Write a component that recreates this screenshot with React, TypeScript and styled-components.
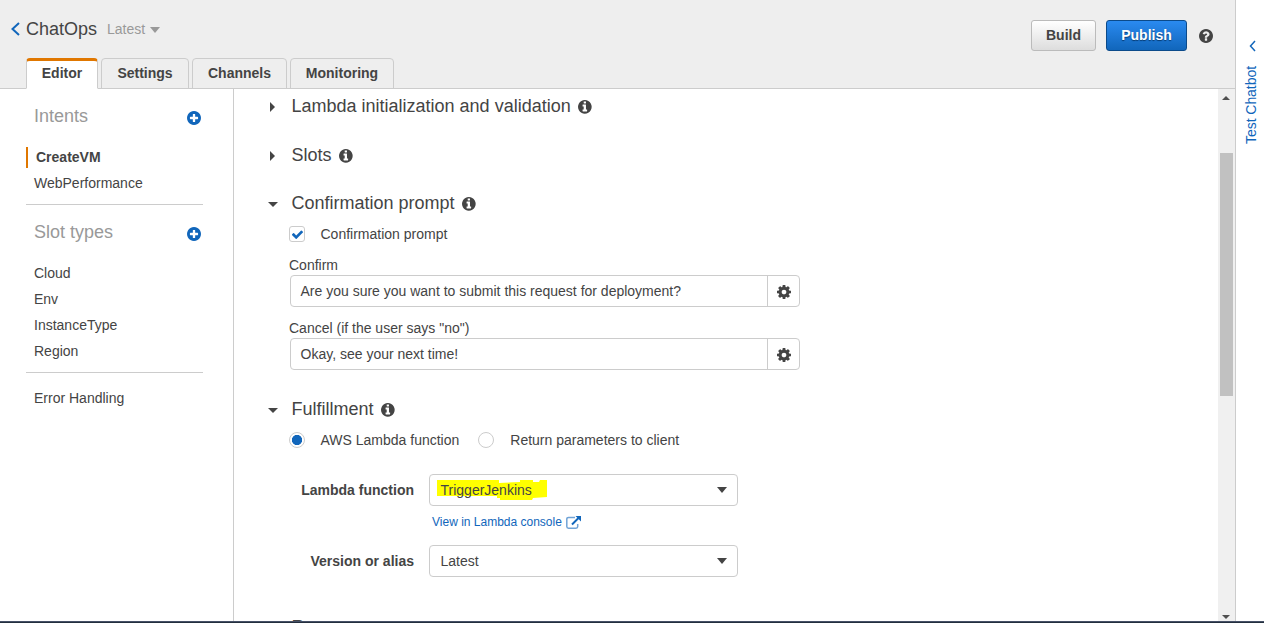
import React from "react";
import styled, { createGlobalStyle, css } from "styled-components";

const GlobalStyle = createGlobalStyle`
  * { box-sizing: border-box; }
  body {
    margin: 0;
    background: #fff;
    color: #444;
    font: 14px/20px "Liberation Sans", Arial, sans-serif;
    overflow: hidden;
  }
`;

const line = "#ccc";
const blue = "#1166bb";
const orange = "#e07700";

const Page = styled.div`
  display: flex;
  flex-direction: column;
  height: 623px;
`;

const Workspace = styled.div`
  display: flex;
  flex: 1;
  min-height: 0;
`;

const Console = styled.div`
  display: flex;
  flex-direction: column;
  flex: 1;
  min-width: 0;
  border-right: 1px solid ${line};
`;

const BottomEdge = styled.div`
  height: 2px;
  background: #232f3e;
  border-top: 1px solid #465066;
`;

const Header = styled.header`
  display: flex;
  justify-content: space-between;
  height: 89px;
  background: #eee;
  border-bottom: 1px solid ${line};
`;

const HeaderLeft = styled.div`
  display: flex;
  flex-direction: column;
  justify-content: space-between;
`;

const TitleRow = styled.div`
  display: flex;
  align-items: center;
  height: 24px;
  margin: 17px 0 0 11px;
`;

const BotName = styled.h1`
  margin: 0 0 0 6px;
  width: 81px;
  font-size: 18px;
  font-weight: normal;
  line-height: 24px;
`;

const VersionMenu = styled.span`
  display: flex;
  align-items: center;
  gap: 5px;
  color: #999;
  svg { margin-top: 2px; }
`;

const Tabs = styled.nav`
  display: flex;
  gap: 3px;
  margin: 0 0 -1px 26px;
`;

const Tab = styled.a<{ $width: number; $active?: boolean }>`
  width: ${(p) => p.$width}px;
  height: 31px;
  padding-top: 4px;
  border: 1px solid ${line};
  border-radius: 4px 4px 0 0;
  font-weight: bold;
  line-height: 20px;
  text-align: center;
  ${(p) =>
    p.$active &&
    css`
      padding-top: 2px;
      background: #fff;
      border-top: 3px solid ${orange};
      border-bottom-color: #fff;
    `}
`;

const Actions = styled.div`
  display: flex;
  align-items: flex-start;
  padding: 20px 22px 0 0;
  gap: 10px;
`;

const Button = styled.button<{ $primary?: boolean }>`
  width: ${(p) => (p.$primary ? 81 : 65)}px;
  height: 31px;
  padding: 0;
  border: 1px solid ${(p) => (p.$primary ? "#0b4a8a" : "#bbb")};
  border-radius: 3px;
  background: ${(p) =>
    p.$primary ? "linear-gradient(#2a8af0, #1166bb)" : "linear-gradient(#fff, #ddd)"};
  color: ${(p) => (p.$primary ? "#fff" : "#444")};
  text-shadow: ${(p) => (p.$primary ? "0 1px 1px #063a70" : "none")};
  font: bold 14px/27px "Liberation Sans", Arial, sans-serif;
`;

const HelpLink = styled.span`
  display: flex;
  margin: 9px 0 0 2px;
`;

const Body = styled.div`
  display: flex;
  flex: 1;
  min-height: 0;
`;

const Sidebar = styled.aside`
  width: 234px;
  padding: 15px 30px 0 26px;
  border-right: 1px solid ${line};
`;

const SideGroup = styled.section`
  border-bottom: 1px solid ${line};
  &:nth-of-type(1) { height: 101px; }
  &:nth-of-type(2) { height: 168px; padding-top: 15px; }
  &:nth-of-type(3) { padding-top: 12px; border: 0; }
`;

const SideHeading = styled.div`
  display: flex;
  justify-content: space-between;
  height: 40px;
  padding: 0 2px 0 8px;
  color: #999;
  font-size: 18px;
  line-height: 24px;
  svg { margin-top: 7px; }
`;

const SideItem = styled.div<{ $active?: boolean }>`
  height: 26px;
  padding: 3px 0 3px 8px;
  ${(p) =>
    p.$active &&
    css`
      height: 21px;
      margin: 3px 0 2px;
      padding: 0 0 0 8px;
      border-left: 2px solid ${orange};
      font-weight: bold;
    `}
`;

const Content = styled.main`
  flex: 1;
  min-width: 0;
  padding: 5px 0 0 34px;
  overflow: hidden;
`;

const SectionHead = styled.h2<{ $after: number }>`
  display: flex;
  align-items: center;
  height: 24px;
  margin: 0 0 ${(p) => p.$after}px;
  font-size: 18px;
  font-weight: normal;
  line-height: 24px;
`;

const Twisty = styled.span`
  display: flex;
  width: 23.5px;
  padding-top: 2px;
`;

const InfoMark = styled.span`
  display: flex;
  margin: 2px 0 0 7.5px;
`;

const OptionRow = styled.div`
  display: flex;
  align-items: center;
  height: 20px;
  padding-left: 21px;
`;

const OptionLabel = styled.label<{ $gap?: number }>`
  margin: 0 19px 0 ${(p) => p.$gap ?? 15.5}px;
`;

const CheckBox = styled.span`
  display: flex;
  align-items: center;
  justify-content: center;
  width: 16px;
  height: 16px;
  border: 1px solid ${line};
  border-radius: 3px;
`;

const Radio = styled.span<{ $on?: boolean }>`
  width: 16px;
  height: 16px;
  border: 1px solid ${line};
  border-radius: 50%;
  background: ${(p) => (p.$on ? `radial-gradient(circle, ${blue} 4.8px, #fff 5.4px)` : "#fff")};
`;

const Field = styled.div`
  padding: 11px 0 0 21px;
`;

const FieldLabel = styled.label`
  display: block;
  height: 20px;
`;

const InputGroup = styled.div`
  display: flex;
  width: 510px;
  height: 32px;
  margin-left: 1px;
  border: 1px solid ${line};
  border-radius: 4px;
`;

const InputText = styled.div`
  flex: 1;
  padding: 5px 9.5px;
`;

const GearButton = styled.span`
  display: flex;
  align-items: center;
  justify-content: center;
  width: 32px;
  padding-top: 2px;
  border-left: 1px solid ${line};
`;

const Fulfillment = styled.div`
  padding-top: 27px;
`;

const LambdaForm = styled.form`
  padding-top: 24px;
`;

const NextSection = styled.div`
  padding-top: 38px;
`;

const FormRow = styled.div`
  display: flex;
  align-items: center;
`;

const FormLabel = styled.label`
  width: 146px;
  margin-right: 15px;
  font-weight: bold;
  text-align: right;
`;

const Select = styled.div`
  position: relative;
  display: flex;
  align-items: center;
  justify-content: space-between;
  width: 309px;
  height: 32px;
  padding: 0 10px 0 10.5px;
  border: 1px solid ${line};
  border-radius: 4px;
`;

const SelectText = styled.span`
  position: relative;
`;

const Highlight = styled.svg`
  position: absolute;
  left: 7px;
  top: 5px;
`;

const ConsoleLink = styled.a`
  display: flex;
  align-items: center;
  gap: 4px;
  height: 39px;
  padding: 0 0 7px 164px;
  color: ${blue};
  font-size: 12px;
`;

const ScrollTrack = styled.div`
  display: flex;
  flex-direction: column;
  align-items: center;
  justify-content: space-between;
  width: 17px;
  padding: 7px 1px 2px 0;
  background: #f0f0f0;
`;

const ScrollThumb = styled.div`
  width: 13px;
  height: 243px;
  margin: 0 -1px 166px 0;
  background: #c1c1c1;
`;

const Rail = styled.aside`
  display: flex;
  flex-direction: column;
  align-items: center;
  width: 28px;
  padding: 40px 0 0 5px;
  color: ${blue};
`;

const RailText = styled.span`
  margin: 14px 3px 0 0;
  letter-spacing: -0.05px;
  writing-mode: vertical-rl;
  transform: rotate(180deg);
`;

const disc =
  "M1664 896q0 209-103 385.5t-279.5 279.5-385.5 103-385.5-103-279.5-279.5-103-385.5 103-385.5 279.5-279.5 385.5-103 385.5 103 279.5 279.5 103 385.5z";
const glyphs = {
  info:
    disc +
    "M1152 1376v-160q0-14-9-23t-23-9h-96v-512q0-14-9-23t-23-9h-320q-14 0-23 9t-9 23v160q0 14 9 23t23 9h96v320h-96q-14 0-23 9t-9 23v160q0 14 9 23t23 9h448q14 0 23-9t9-23zm-128-896v-160q0-14-9-23t-23-9h-192q-14 0-23 9t-9 23v160q0 14 9 23t23 9h192q14 0 23-9t9-23z",
  plus:
    disc +
    "M1344 960v-128q0-26-19-45t-45-19h-256v-256q0-26-19-45t-45-19h-128q-26 0-45 19t-19 45v256h-256q-26 0-45 19t-19 45v128q0 26 19 45t45 19h256v256q0 26 19 45t45 19h128q26 0 45-19t19-45v-256h256q26 0 45-19t19-45z",
  help:
    disc +
    "M1024 1376v-192q0-14-9-23t-23-9h-192q-14 0-23 9t-9 23v192q0 14 9 23t23 9h192q14 0 23-9t9-23zm256-672q0-88-55.5-163t-138.5-116-170-41q-243 0-371 213-15 24 8 42l132 100q7 6 19 6 16 0 25-12 53-68 86-92 34-24 86-24 48 0 85.5 26t37.5 59q0 38-20 61t-68 45q-63 28-115.5 86.5t-52.5 125.5v36q0 14 9 23t23 9h192q14 0 23-9t9-23q0-19 21.5-49.5t54.5-49.5q32-18 49-28.5t46-35 44.5-48 28-60.5 12.5-81z",
  gear:
    "M1152 896q0-106-75-181t-181-75-181 75-75 181 75 181 181 75 181-75 75-181zm512-109v222q0 12-8 23t-20 13l-185 28q-19 54-39 91 35 50 107 138 10 12 10 25t-9 23q-27 37-99 108t-94 71q-12 0-26-9l-138-108q-44 23-91 38-16 136-29 186-7 28-36 28h-222q-14 0-24.5-8.5t-11.5-21.5l-28-184q-49-16-90-37l-141 107q-10 9-25 9-14 0-25-11-126-114-165-168-7-10-7-23 0-12 8-23 15-21 51-66.5t54-70.5q-27-50-41-99l-183-27q-13-2-21-12.5t-8-23.5v-222q0-12 8-23t19-13l186-28q14-46 39-92-40-57-107-138-10-12-10-24 0-10 9-23 26-36 98.5-107.5t94.5-71.5q13 0 26 10l138 107q44-23 91-38 16-136 29-186 7-28 36-28h222q14 0 24.5 8.5t11.5 21.5l28 184q49 16 90 37l142-107q9-9 24-9 13 0 25 10 129 119 165 170 7 8 7 22 0 12-8 23-15 21-51 66.5t-54 70.5q26 50 41 98l183 28q13 2 21 12.5t8 23.5z",
  check:
    "M1671 566q0 40-28 68l-724 724-136 136q-28 28-68 28t-68-28l-136-136-362-362q-28-28-28-68t28-68l136-136q28-28 68-28t68 28l294 295 656-657q28-28 68-28t68 28l136 136q28 28 28 68z",
};

function Glyph({ name, color = "#444", size = 14 }: { name: keyof typeof glyphs; color?: string; size?: number }) {
  return (
    <svg width={size} height={size} viewBox="128 128 1536 1536" fill={color} fillRule="evenodd">
      <path d={glyphs[name]} />
    </svg>
  );
}

function Caret({ color = "#444", width = 10, height = 6, up = false }) {
  return (
    <svg width={width} height={height} viewBox="0 0 10 6" preserveAspectRatio="none" fill={color}>
      <path d={up ? "M0 6L5 0L10 6Z" : "M0 0H10L5 6Z"} />
    </svg>
  );
}

function Chevron({ w, h, stroke }: { w: number; h: number; stroke: number }) {
  return (
    <svg width={w} height={h} viewBox={`0 0 ${w} ${h}`} fill="none" stroke={blue} strokeWidth={stroke}>
      <path d={`M${w - 1} 1L1.5 ${h / 2}L${w - 1} ${h - 1}`} />
    </svg>
  );
}

function Section({ title, open, after, info = true }: { title: string; open?: boolean; after: number; info?: boolean }) {
  return (
    <SectionHead $after={after}>
      <Twisty>
        {open ? (
          <Caret width={10} height={5} />
        ) : (
          <svg width="10" height="10" viewBox="0 0 10 10" fill="#444">
            <path d="M2 0L7 5L2 10Z" />
          </svg>
        )}
      </Twisty>
      {title}
      {info && (
        <InfoMark>
          <Glyph name="info" size={13.7} />
        </InfoMark>
      )}
    </SectionHead>
  );
}

function PromptField({ label, value }: { label: string; value: string }) {
  return (
    <Field>
      <FieldLabel>{label}</FieldLabel>
      <InputGroup>
        <InputText>{value}</InputText>
        <GearButton>
          <Glyph name="gear" />
        </GearButton>
      </InputGroup>
    </Field>
  );
}

export default function App() {
  return (
    <Page>
      <GlobalStyle />
      <Workspace>
        <Console>
          <Header>
            <HeaderLeft>
              <TitleRow>
                <Chevron w={9} h={14} stroke={2} />
                <BotName>ChatOps</BotName>
                <VersionMenu>
                  Latest <Caret color="#999" />
                </VersionMenu>
              </TitleRow>
              <Tabs>
                <Tab $width={72} $active>Editor</Tab>
                <Tab $width={88}>Settings</Tab>
                <Tab $width={95}>Channels</Tab>
                <Tab $width={104}>Monitoring</Tab>
              </Tabs>
            </HeaderLeft>
            <Actions>
              <Button>Build</Button>
              <Button $primary>Publish</Button>
              <HelpLink>
                <Glyph name="help" />
              </HelpLink>
            </Actions>
          </Header>
          <Body>
            <Sidebar>
              <SideGroup>
                <SideHeading>
                  Intents <Glyph name="plus" color={blue} />
                </SideHeading>
                <SideItem $active>CreateVM</SideItem>
                <SideItem>WebPerformance</SideItem>
              </SideGroup>
              <SideGroup>
                <SideHeading>
                  Slot types <Glyph name="plus" color={blue} />
                </SideHeading>
                <SideItem>Cloud</SideItem>
                <SideItem>Env</SideItem>
                <SideItem>InstanceType</SideItem>
                <SideItem>Region</SideItem>
              </SideGroup>
              <SideGroup>
                <SideItem>Error Handling</SideItem>
              </SideGroup>
            </Sidebar>
            <Content>
              <Section title="Lambda initialization and validation" after={25} />
              <Section title="Slots" after={24} />
              <Section title="Confirmation prompt" open after={9} />
              <OptionRow>
                <CheckBox>
                  <Glyph name="check" color={blue} size={11} />
                </CheckBox>
                <OptionLabel>Confirmation prompt</OptionLabel>
              </OptionRow>
              <PromptField label="Confirm" value="Are you sure you want to submit this request for deployment?" />
              <PromptField label={'Cancel (if the user says "no")'} value="Okay, see your next time!" />
              <Fulfillment>
                <Section title="Fulfillment" open after={9} />
                <OptionRow>
                  <Radio $on />
                  <OptionLabel>AWS Lambda function</OptionLabel>
                  <Radio />
                  <OptionLabel $gap={16}>Return parameters to client</OptionLabel>
                </OptionRow>
              </Fulfillment>
              <LambdaForm>
                <FormRow>
                  <FormLabel>Lambda function</FormLabel>
                  <Select>
                    <Highlight width="110" height="20" fill="#ff0">
                      <path d="M0 0H62V3L83 2V0H96V2H102L103 0H110V17L96 18L95 20H63V18H60V16H0Z" />
                    </Highlight>
                    <SelectText>TriggerJenkins</SelectText>
                    <Caret />
                  </Select>
                </FormRow>
                <ConsoleLink>
                  View in Lambda console
                  <svg width="15" height="13" viewBox="0 0 15 13" fill="none" stroke={blue}>
                    <path d="M9 1.5H2.5Q0.8 1.5 0.8 3V10.5Q0.8 12.2 2.5 12.2H10Q11.7 12.2 11.7 10.5V8" strokeWidth="1.5" opacity=".6" />
                    <path d="M6 8.5L12.5 2" strokeWidth="2" />
                    <path d="M9.5 0H15V5.5Z" fill={blue} stroke="none" />
                  </svg>
                </ConsoleLink>
                <FormRow>
                  <FormLabel>Version or alias</FormLabel>
                  <Select>
                    <SelectText>Latest</SelectText>
                    <Caret />
                  </Select>
                </FormRow>
              </LambdaForm>
              <NextSection>
                <Section title="Response" after={0} info={false} />
              </NextSection>
            </Content>
            <ScrollTrack>
              <Caret up width={8} height={4} color="#505050" />
              <ScrollThumb />
              <Caret width={8} height={4} color="#505050" />
            </ScrollTrack>
          </Body>
        </Console>
        <Rail>
          <Chevron w={7} h={12} stroke={1.5} />
          <RailText>Test Chatbot</RailText>
        </Rail>
      </Workspace>
      <BottomEdge />
    </Page>
  );
}
